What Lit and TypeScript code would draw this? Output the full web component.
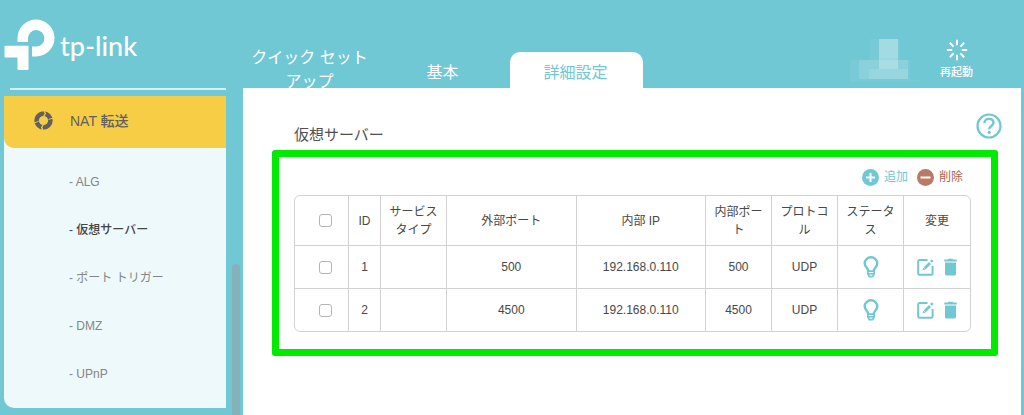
import { LitElement, html, css, svg } from "lit";
import { customElement, state } from "lit/decorators.js";

interface ServerRule {
  id: number;
  service: string;
  external: string;
  ip: string;
  internal: string;
  protocol: string;
}

const bulbIcon = svg`<svg width="16" height="22" viewBox="0 0 16 22" fill="none" stroke="currentColor" aria-hidden="true">
  <path stroke-width="2.4" d="M5.4 15C5.2 12 1.7 11 1.7 7.3a6.3 6 0 0 1 12.6 0C14.3 11 10.8 12 10.6 15"/>
  <path stroke-width="1.8" d="M4.8 15.200h6.400v2.600L9.600 20.600H6.400L4.800 17.800z"/>
  <path stroke-width="1.600" d="M5 17.800h6"/>
</svg>`;

const editIcon = svg`<svg width="17" height="18" viewBox="0 0 17 18" fill="none" stroke="currentColor" aria-hidden="true">
  <path stroke-width="2" d="M10.5 2H2.6A1.4 1.4 0 0 0 1.2 3.4v12A1.4 1.4 0 0 0 2.6 16.800h11.600a1.4 1.4 0 0 0 1.4-1.400V8"/>
  <path stroke-width="2.800" d="M7.800 10.200 13 5"/>
  <path stroke-width="2.600" d="m14 3.900 1.700-1.700"/>
  <path stroke="none" fill="currentColor" d="M6.400 9.400 8.600 11.600l-3.200.9z"/>
</svg>`;

const trashIcon = svg`<svg width="13" height="18" viewBox="0 0 13 18" fill="currentColor" aria-hidden="true">
  <path d="M4.200 .8h4.600v.8H12.700v1.800H.3V1.600h3.900zM1 4.500h11v11.400a1.500 1.500 0 0 1-1.500 1.500h-8A1.500 1.500 0 0 1 1 15.900z"/>
</svg>`;

@customElement("app-root")
export class AppRoot extends LitElement {
  static styles = css`
    :host {
      --teal: #70c8d4;
      display: grid;
      grid-template-columns: 226px 17px minmax(0, 1fr);
      box-sizing: border-box;
      min-height: 100vh;
      padding-right: 3px;
      background: var(--teal);
      color: #484848;
      font: 12px/18px "Liberation Sans", "Noto Sans CJK JP", sans-serif;
    }
    * { box-sizing: border-box; }
    a { color: inherit; text-decoration: none; }
    svg { display: block; }
    button {
      display: inline-flex;
      align-items: center;
      padding: 0;
      border: 0;
      background: none;
      color: inherit;
      font: inherit;
      cursor: pointer;
    }

    .side { padding-left: 4px; }
    .brand {
      display: flex;
      align-items: center;
      gap: 5px;
      height: 88px;
      color: #fff;
    }
    .brand-name { font: 500 27px/32px Lato, sans-serif; padding-top: 4px; }
    .rule { height: 2px; margin: 0 0 6px 6px; background: #d5f0f4; }
    .menu {
      border-radius: 0 0 0 10px;
      background: #eef9fb;
    }
    .group {
      display: flex;
      align-items: center;
      gap: 17px;
      height: 52px;
      padding: 0 0 3px 30px;
      border-radius: 0 0 0 10px;
      background: #f7cd45;
      color: #606060;
      font-size: 14px;
      font-weight: 500;
    }
    .items { margin: 0; padding: 10px 0; list-style: none; }
    .item {
      display: block;
      padding-left: 65px;
      color: #858585;
      line-height: 48px;
    }
    .item.current { color: #444; font-weight: 500; }

    .gutter { display: flex; padding: 264px 3px 0 6px; }
    .thumb { flex: 1; border-radius: 4px 4px 0 0; background: #86b1b9; }

    .main { display: flex; flex-direction: column; min-width: 0; }
    .top {
      display: flex;
      align-items: flex-end;
      height: 88px;
      padding: 0 48px 0 1px;
      color: #fff;
    }
    .tabs { display: flex; align-items: flex-end; height: 88px; margin-right: auto; }
    .tab {
      width: 133px;
      height: 42px;
      padding: 0 8px 0 6px;
      text-align: center;
      font-size: 16px;
      line-height: 24px;
    }
    .tab.single { height: 36px; padding-top: 9px; }
    .tab.current {
      border-radius: 10px 10px 0 0;
      background: #fff;
      color: var(--teal);
    }
    .mosaic { margin: 0 20px 6px 0; }
    .reboot {
      flex-direction: column;
      gap: 2px;
      padding-bottom: 7px;
      font-size: 11px;
      font-weight: 500;
    }

    .panel { flex: 1; padding: 25px 23px 56px 29px; background: #fff; }
    .heading {
      display: flex;
      align-items: flex-start;
      justify-content: space-between;
      height: 37px;
      padding: 0 0 0 22px;
      color: var(--teal);
    }
    .heading h1 {
      margin: 11px 0 0;
      color: #505050;
      font-size: 15px;
      font-weight: 400;
      line-height: 22px;
    }
    .heading button { margin-right: -4px; }
    .highlight {
      border: 7px solid #00eb00;
      border-radius: 3px;
      padding: 10px 20px 17px 15px;
    }
    .actions {
      display: flex;
      justify-content: flex-end;
      gap: 9px;
      padding: 0 8px 8px 0;
      line-height: 20px;
    }
    .actions button { gap: 5px; }
    .add { color: var(--teal); }
    .remove { color: #a86450; }

    table {
      width: 100%;
      table-layout: fixed;
      border: 1px solid #d2d2d2;
      border-radius: 6px;
      border-spacing: 0;
      text-align: center;
    }
    .w-check { width: 54px; }
    .w-id { width: 32px; }
    .w-mid { width: 66px; }
    th, td {
      height: 43px;
      padding: 0 6px;
      border: 0 solid #d2d2d2;
      border-right-width: 1px;
      border-bottom-width: 1px;
      vertical-align: middle;
    }
    th { height: 50px; font-weight: 400; }
    tr > :last-child { border-right-width: 0; }
    tbody tr:last-child td { height: 42px; border-bottom-width: 0; }
    .pick {
      display: block;
      appearance: none;
      width: 13px;
      height: 13px;
      margin: 0 0 0 18px;
      border: 1px solid #b4b4b4;
      border-radius: 3px;
      background: #fff;
    }
    .pick:checked { background: var(--teal); }
    .status { color: var(--teal); }
    .status svg { margin: 0 auto; }
    .tools { display: flex; justify-content: center; gap: 10px; color: var(--teal); }
  `;

  @state() private selected = new Set<number>();

  private rules: ServerRule[] = [
    { id: 1, service: "", external: "500", ip: "192.168.0.110", internal: "500", protocol: "UDP" },
    { id: 2, service: "", external: "4500", ip: "192.168.0.110", internal: "4500", protocol: "UDP" },
  ];

  private items = ["ALG", "仮想サーバー", "ポート トリガー", "DMZ", "UPnP"];

  private toggle(id: number) {
    const next = new Set(this.selected);
    if (!next.delete(id)) next.add(id);
    this.selected = next;
  }

  private toggleAll(e: Event) {
    const on = (e.target as HTMLInputElement).checked;
    this.selected = new Set(on ? this.rules.map((r) => r.id) : []);
  }

  private renderSide() {
    return html`<aside class="side">
      <a class="brand" href="#">
        <svg width="51" height="51" viewBox="3.500 18.500 51 51" fill="currentColor" aria-hidden="true">
          <path d="M17 41.500v-4a18.500 18.500 0 1 1 18.500 18.500h-4V46h4a8.200 8.200 0 1 0-8-8.200v3.700z"/>
          <path d="M5 45.300h23V68.500a1 1 0 0 1-1 1h-9a1 1 0 0 1-1-1V57H5a1 1 0 0 1-1-1v-9.700a1 1 0 0 1 1-1z"/>
        </svg>
        <span class="brand-name">tp-link</span>
      </a>
      <div class="rule"></div>
      <nav class="menu">
        <a class="group" href="#">
          <svg width="19" height="19" viewBox="0 0 19 19" fill="none" stroke="currentColor" aria-hidden="true">
            <circle cx="9.500" cy="9.500" r="6.900" stroke-width="4.600"/>
            <path stroke="#f7cd45" stroke-width="1.200" d="M10 0l1.400 2.600-1.600 2.800M9 19l-1.400-2.600 1.600-2.800"/>
            <path stroke="#f7cd45" stroke-width=".9" d="M19 7l-4.500 1.600M0 12l4.500-1.600"/>
          </svg>
          <span>NAT 転送</span>
        </a>
        <ul class="items">
          ${this.items.map((t) => html`<li><a class="item ${t === "仮想サーバー" ? "current" : ""}" href="#">- ${t}</a></li>`)}
        </ul>
      </nav>
    </aside>`;
  }

  private renderTop() {
    return html`<header class="top">
      <nav class="tabs">
        <a class="tab" href="#">クイック セットアップ</a>
        <a class="tab single" href="#">基本</a>
        <a class="tab single current" href="#">詳細設定</a>
      </nav>
      <svg class="mosaic" width="70" height="44" viewBox="0 0 70 44" fill="#fff" aria-hidden="true">
        <path opacity=".05" d="M0 22h60v20h10v2H0zM20 1h30v21H20z"/>
        <path opacity=".14" d="M9 22h49v19H9z"/>
        <path opacity=".12" d="M19 31h39v10H19z"/>
        <path opacity=".26" d="M29 1h19v30H29z"/>
        <path opacity=".1" d="M29 1h19v19H29z"/>
      </svg>
      <button class="reboot">
        <svg width="22" height="22" viewBox="0 0 22 22" stroke="currentColor" stroke-width="2" aria-hidden="true">
          <path d="M11 .8v5.400M11 15.800v5.400M.8 11h5.400M15.800 11h5.400M3.800 3.800l3.800 3.800M14.400 14.400l3.800 3.800M3.800 18.200l3.800-3.800M14.400 7.600l3.800-3.800"/>
        </svg>
        <span>再起動</span>
      </button>
    </header>`;
  }

  render() {
    return html`
      ${this.renderSide()}
      <div class="gutter"><div class="thumb"></div></div>
      <div class="main">
        ${this.renderTop()}
        <main class="panel">
          <div class="heading">
            <h1>仮想サーバー</h1>
            <button aria-label="ヘルプ">
              <svg width="26" height="26" viewBox="0 0 26 26" fill="none" stroke="currentColor" aria-hidden="true">
                <circle cx="13" cy="13" r="11.500" stroke-width="2.200"/>
                <path stroke-width="2.400" d="M8.400 10.200c0-2.700 1.900-4.300 4.500-4.300s4.600 1.400 4.600 3.900c0 3.200-4.300 3.200-4.300 6.400"/>
                <circle cx="13.200" cy="19.300" r="1.600" fill="currentColor" stroke="none"/>
              </svg>
            </button>
          </div>
          <section class="highlight">
            <div class="actions">
              <button class="add">
                <svg width="17" height="17" viewBox="0 0 17 17" aria-hidden="true">
                  <circle cx="8.500" cy="8.500" r="8.500" fill="#70c8d4"/>
                  <path stroke="#fff" stroke-width="2" d="M8.500 4v9M4 8.500h9"/>
                </svg>
                追加
              </button>
              <button class="remove">
                <svg width="17" height="17" viewBox="0 0 17 17" aria-hidden="true">
                  <circle cx="8.500" cy="8.500" r="8.500" fill="#b97b66"/>
                  <path stroke="#fff" stroke-width="2" d="M3.500 8.500h10"/>
                </svg>
                削除
              </button>
            </div>
            <table>
              <colgroup>
                <col class="w-check" /><col class="w-id" /><col class="w-mid" /><col /><col />
                <col class="w-mid" /><col class="w-mid" /><col class="w-mid" /><col class="w-mid" />
              </colgroup>
              <thead>
                <tr>
                  <th>
                    <input class="pick" type="checkbox" aria-label="すべて選択"
                      .checked=${this.selected.size === this.rules.length} @change=${this.toggleAll} />
                  </th>
                  <th>ID</th>
                  <th>サービスタイプ</th>
                  <th>外部ポート</th>
                  <th>内部 IP</th>
                  <th>内部ポート</th>
                  <th>プロトコル</th>
                  <th>ステータス</th>
                  <th>変更</th>
                </tr>
              </thead>
              <tbody>
                ${this.rules.map((r) => html`<tr>
                  <td>
                    <input class="pick" type="checkbox" aria-label="ID ${r.id}"
                      .checked=${this.selected.has(r.id)} @change=${() => this.toggle(r.id)} />
                  </td>
                  <td>${r.id}</td>
                  <td>${r.service}</td>
                  <td>${r.external}</td>
                  <td>${r.ip}</td>
                  <td>${r.internal}</td>
                  <td>${r.protocol}</td>
                  <td class="status">${bulbIcon}</td>
                  <td>
                    <div class="tools">
                      <button aria-label="編集">${editIcon}</button>
                      <button aria-label="削除">${trashIcon}</button>
                    </div>
                  </td>
                </tr>`)}
              </tbody>
            </table>
          </section>
        </main>
      </div>
    `;
  }
}
